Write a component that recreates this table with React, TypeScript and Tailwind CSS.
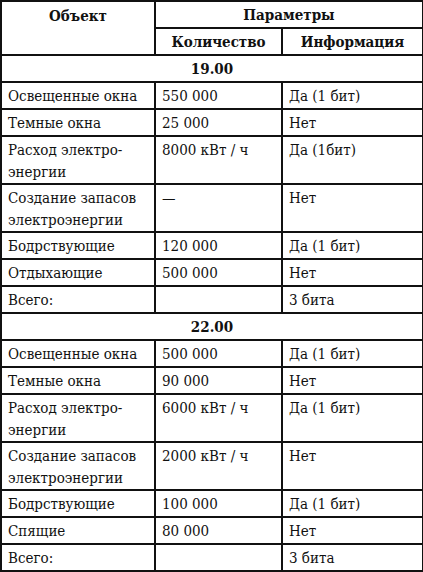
import React from 'react';

type Row = { name: string[]; qty: string; info: string };

const evening: Row[] = [
  { name: ['Освещенные окна'], qty: '550 000', info: 'Да (1 бит)' },
  { name: ['Темные окна'], qty: '25 000', info: 'Нет' },
  { name: ['Расход электро-', 'энергии'], qty: '8000 кВт / ч', info: 'Да (1бит)' },
  { name: ['Создание запасов', 'электроэнергии'], qty: '—', info: 'Нет' },
  { name: ['Бодрствующие'], qty: '120 000', info: 'Да (1 бит)' },
  { name: ['Отдыхающие'], qty: '500 000', info: 'Нет' },
  { name: ['Всего:'], qty: '', info: '3 бита' },
];

const night: Row[] = [
  { name: ['Освещенные окна'], qty: '500 000', info: 'Да (1 бит)' },
  { name: ['Темные окна'], qty: '90 000', info: 'Нет' },
  { name: ['Расход электро-', 'энергии'], qty: '6000 кВт / ч', info: 'Да (1 бит)' },
  { name: ['Создание запасов', 'электроэнергии'], qty: '2000 кВт / ч', info: 'Нет' },
  { name: ['Бодрствующие'], qty: '100 000', info: 'Да (1 бит)' },
  { name: ['Спящие'], qty: '80 000', info: 'Нет' },
  { name: ['Всего:'], qty: '', info: '3 бита' },
];

const line = 'border-2 border-[#111]';
const cell = 'border-2 border-[#111] px-[6px] pt-[2px] align-top text-left font-normal whitespace-nowrap';

function Section({ time, rows }: { time: string; rows: Row[] }) {
  return (
    <>
      <tr className="h-[27px]">
        <td colSpan={3} className={`${line} text-center align-middle font-bold`}>
          {time}
        </td>
      </tr>
      {rows.map((r, i) => (
        <tr key={i} className={r.name.length > 1 ? 'h-[48px]' : 'h-[27px]'}>
          <td className={cell}>
            {r.name.map((n, j) => (
              <div key={j}>{n}</div>
            ))}
          </td>
          <td className={cell}>{r.qty}</td>
          <td className={cell}>{r.info}</td>
        </tr>
      ))}
    </>
  );
}

export default function App() {
  return (
    <div className="bg-white w-[423px] h-[572px] overflow-hidden font-['DejaVu_Serif_Condensed','DejaVu_Serif',serif] font-stretch-condensed">
      <table className="w-[422px] border-collapse table-fixed text-[15px] leading-[22px] text-[#111]">
        <colgroup>
          <col className="w-[154px]" />
          <col className="w-[127px]" />
          <col className="w-[141px]" />
        </colgroup>
        <thead>
          <tr className="h-[27px]">
            <th rowSpan={2} className={`${line} align-top pt-[3px] text-center font-bold`}>
              Объект
            </th>
            <th colSpan={2} className={`${line} text-center align-middle font-bold`}>
              Параметры
            </th>
          </tr>
          <tr className="h-[27px]">
            <th className={`${line} text-center align-middle font-bold`}>Количество</th>
            <th className={`${line} text-center align-middle font-bold`}>Информация</th>
          </tr>
        </thead>
        <tbody>
          <Section time="19.00" rows={evening} />
          <Section time="22.00" rows={night} />
        </tbody>
      </table>
    </div>
  );
}
